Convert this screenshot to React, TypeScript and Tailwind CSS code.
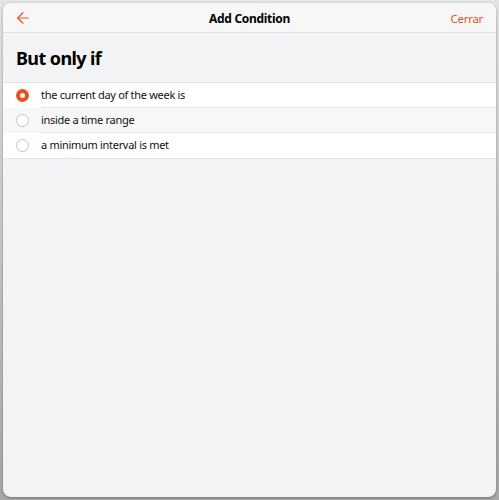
import { ArrowLeft } from "lucide-react";

const options = [
    { label: "the current day of the week is", selected: true },
    { label: "inside a time range", selected: false },
    { label: "a minimum interval is met", selected: false },
];

export default function App() {
    return (
        <div
            className="w-[499px] h-[500px] bg-gradient-to-b from-[#e4e4e4] to-[#a8a8a8] p-[3px] pb-[3px]"
            style={{ fontFamily: '"Noto Sans", "Open Sans", sans-serif' }}
        >
            <div className="h-full w-[493px] rounded-lg bg-[#f2f3f5] overflow-hidden shadow-[0_1px_3px_rgba(0,0,0,0.35)] flex flex-col">
                {/* Header */}
                <div className="h-[30px] bg-[#f7f7f7] border-b border-[#e2e2e2] flex items-center justify-between pl-[11px] pr-3 relative">
                    <ArrowLeft size={18} strokeWidth={1.5} className="text-[#ec4f1c] mt-[1px]" />
                    <span className="absolute left-1/2 -translate-x-1/2 top-[7px] text-[12px] tracking-[-0.3px] font-bold text-black">Add Condition</span>
                    <span className="text-[11.5px] tracking-[-0.3px] text-[#ec4f1c] pr-[1px] pt-[2px]">Cerrar</span>
                </div>

                {/* Section title */}
                <div className="h-[49px] flex items-center px-[13px] pt-[2px]">
                    <h1 className="text-[18px] tracking-[-0.6px] font-bold text-black">But only if</h1>
                </div>

                {/* Options */}
                <div className="border-t border-b border-[#e4e4e4]">
                    {options.map((o, i) => (
                        <div
                            key={o.label}
                            className={`h-[25px] flex items-center ${i % 2 === 1 ? "bg-[#f7f7f7]" : "bg-white"}`}
                        >
                            <div className="w-[38px] flex justify-center pl-[1px]">
                                {o.selected ? (
                                    <span className="w-[13px] h-[13px] rounded-full bg-[#ec4f1c] flex items-center justify-center">
                                        <span className="w-[5px] h-[5px] rounded-full bg-white" />
                                    </span>
                                ) : (
                                    <span className="w-[13px] h-[13px] rounded-full border border-[#c4c4c4] bg-white" />
                                )}
                            </div>
                            <div
                                className={`flex-1 h-full flex items-center text-[11px] tracking-[-0.3px] text-[#111] ${i < options.length - 1 ? "border-b border-[#e8e8e8]" : ""}`}
                            >
                                {o.label}
                            </div>
                        </div>
                    ))}
                </div>
            </div>
        </div>
    );
}
